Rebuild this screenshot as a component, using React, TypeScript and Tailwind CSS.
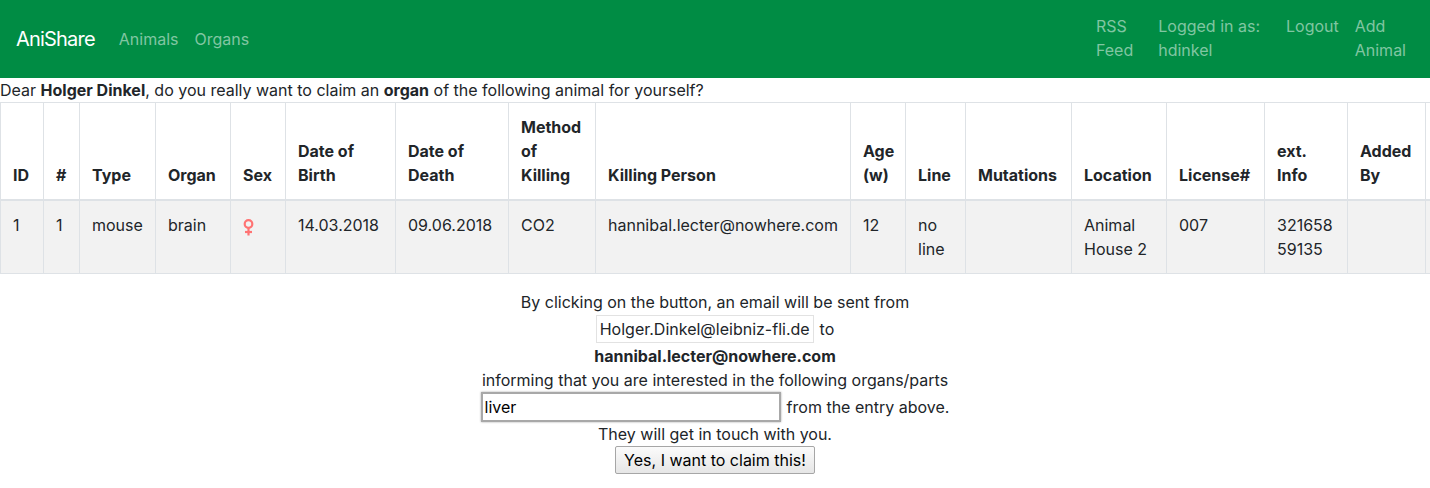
import React from 'react';

const font = { fontFamily: 'Inter, "Liberation Sans", sans-serif' };

const columns: { label: React.ReactNode; width: number }[] = [
  { label: 'ID', width: 43 },
  { label: '#', width: 36 },
  { label: 'Type', width: 76 },
  { label: 'Organ', width: 75 },
  { label: 'Sex', width: 55 },
  { label: 'Date of Birth', width: 110 },
  { label: 'Date of Death', width: 113 },
  { label: 'Method of Killing', width: 87 },
  { label: 'Killing Person', width: 255 },
  { label: 'Age (w)', width: 55 },
  { label: 'Line', width: 60 },
  { label: 'Mutations', width: 106 },
  { label: 'Location', width: 95 },
  { label: 'License#', width: 98 },
  { label: 'ext. Info', width: 83 },
  { label: 'Added By', width: 78 },
  { label: '', width: 100 },
];

function FemaleIcon() {
  return (
    <svg width="11" height="17" viewBox="0 0 11 17" className="mt-[2px] inline-block">
      <circle cx="5.5" cy="5" r="3.8" fill="none" stroke="#ff7373" strokeWidth="2.2" />
      <line x1="5.5" y1="9" x2="5.5" y2="16.5" stroke="#ff7373" strokeWidth="2.2" />
      <line x1="2" y1="13" x2="9" y2="13" stroke="#ff7373" strokeWidth="2.2" />
    </svg>
  );
}

function NavBar() {
  return (
    <nav className="flex h-[78px] items-center bg-[#008c44] px-4">
      <span className="mr-4 text-[20px] leading-[30px] tracking-[-0.8px] text-white">AniShare</span>
      <div className="flex text-[16px] leading-6 text-[#80c6a2]">
        <span className="px-2">Animals</span>
        <span className="px-2">Organs</span>
      </div>
      <div className="ml-auto flex self-start pt-[14px] text-[16px] leading-6 text-[#80c6a2]">
        <span className="px-2">
          RSS
          <br />
          Feed
        </span>
        <span className="ml-[9px] px-2">
          Logged in as:
          <br />
          hdinkel
        </span>
        <span className="ml-[10px] px-2">Logout</span>
        <span className="px-2">
          Add
          <br />
          Animal
        </span>
      </div>
    </nav>
  );
}

function OrganTable() {
  const row: React.ReactNode[] = [
    '1',
    '1',
    'mouse',
    'brain',
    <FemaleIcon key="sex" />,
    '14.03.2018',
    '09.06.2018',
    'CO2',
    'hannibal.lecter@nowhere.com',
    '12',
    'no line',
    '',
    'Animal House 2',
    '007',
    '321658 59135',
    '',
    '',
  ];

  return (
    <div className="w-[1430px] overflow-hidden">
      <table className="w-[1525px] table-fixed border-collapse text-[16px] leading-6 text-[#212529]">
        <colgroup>
          {columns.map((c, i) => (
            <col key={i} style={{ width: c.width }} />
          ))}
        </colgroup>
        <thead>
          <tr>
            {columns.map((c, i) => (
              <th
                key={i}
                className="border border-b-2 border-[#dee2e6] p-3 text-left align-bottom font-bold"
              >
                {c.label}
              </th>
            ))}
          </tr>
        </thead>
        <tbody>
          <tr className="bg-[#f2f2f2]">
            {row.map((v, i) => (
              <td key={i} className="border border-[#dee2e6] p-3 align-top">
                {v}
              </td>
            ))}
          </tr>
        </tbody>
      </table>
    </div>
  );
}

function ClaimForm() {
  return (
    <div className="mt-4 flex flex-col items-center text-[16px] leading-6 text-[#212529]">
      <div>By clicking on the button, an email will be sent from</div>
      <div className="flex h-[30px] items-center">
        <span className="border border-[#e2e2e2] bg-white px-[3px] py-[1px]">
          Holger.Dinkel@leibniz-fli.de
        </span>
        <span className="ml-[6px]">to</span>
      </div>
      <div className="font-bold">hannibal.lecter@nowhere.com</div>
      <div>informing that you are interested in the following organs/parts</div>
      <div className="flex h-[30px] items-center">
        <input
          defaultValue="liver"
          className="h-[30px] w-[300px] border-2 border-[#a8a8a8] bg-white px-[2px] text-[16px] text-black shadow-[0_0_2px_rgba(0,0,0,0.35)] outline-none"
          style={font}
        />
        <span className="ml-[6px]">from the entry above.</span>
      </div>
      <div>They will get in touch with you.</div>
      <button
        className="h-[28px] rounded-[2px] border border-[#a6a6a6] bg-gradient-to-b from-[#fbfbfb] to-[#e6e6e6] px-2 text-[16px] text-black"
        style={font}
      >
        Yes, I want to claim this!
      </button>
    </div>
  );
}

export default function App() {
  return (
    <div className="min-h-[488px] bg-white" style={font}>
      <NavBar />
      <p className="text-[16px] leading-6 text-[#212529]">
        Dear <b>Holger Dinkel</b>, do you really want to claim an <b>organ</b> of the following animal for
        yourself?
      </p>
      <OrganTable />
      <ClaimForm />
    </div>
  );
}
